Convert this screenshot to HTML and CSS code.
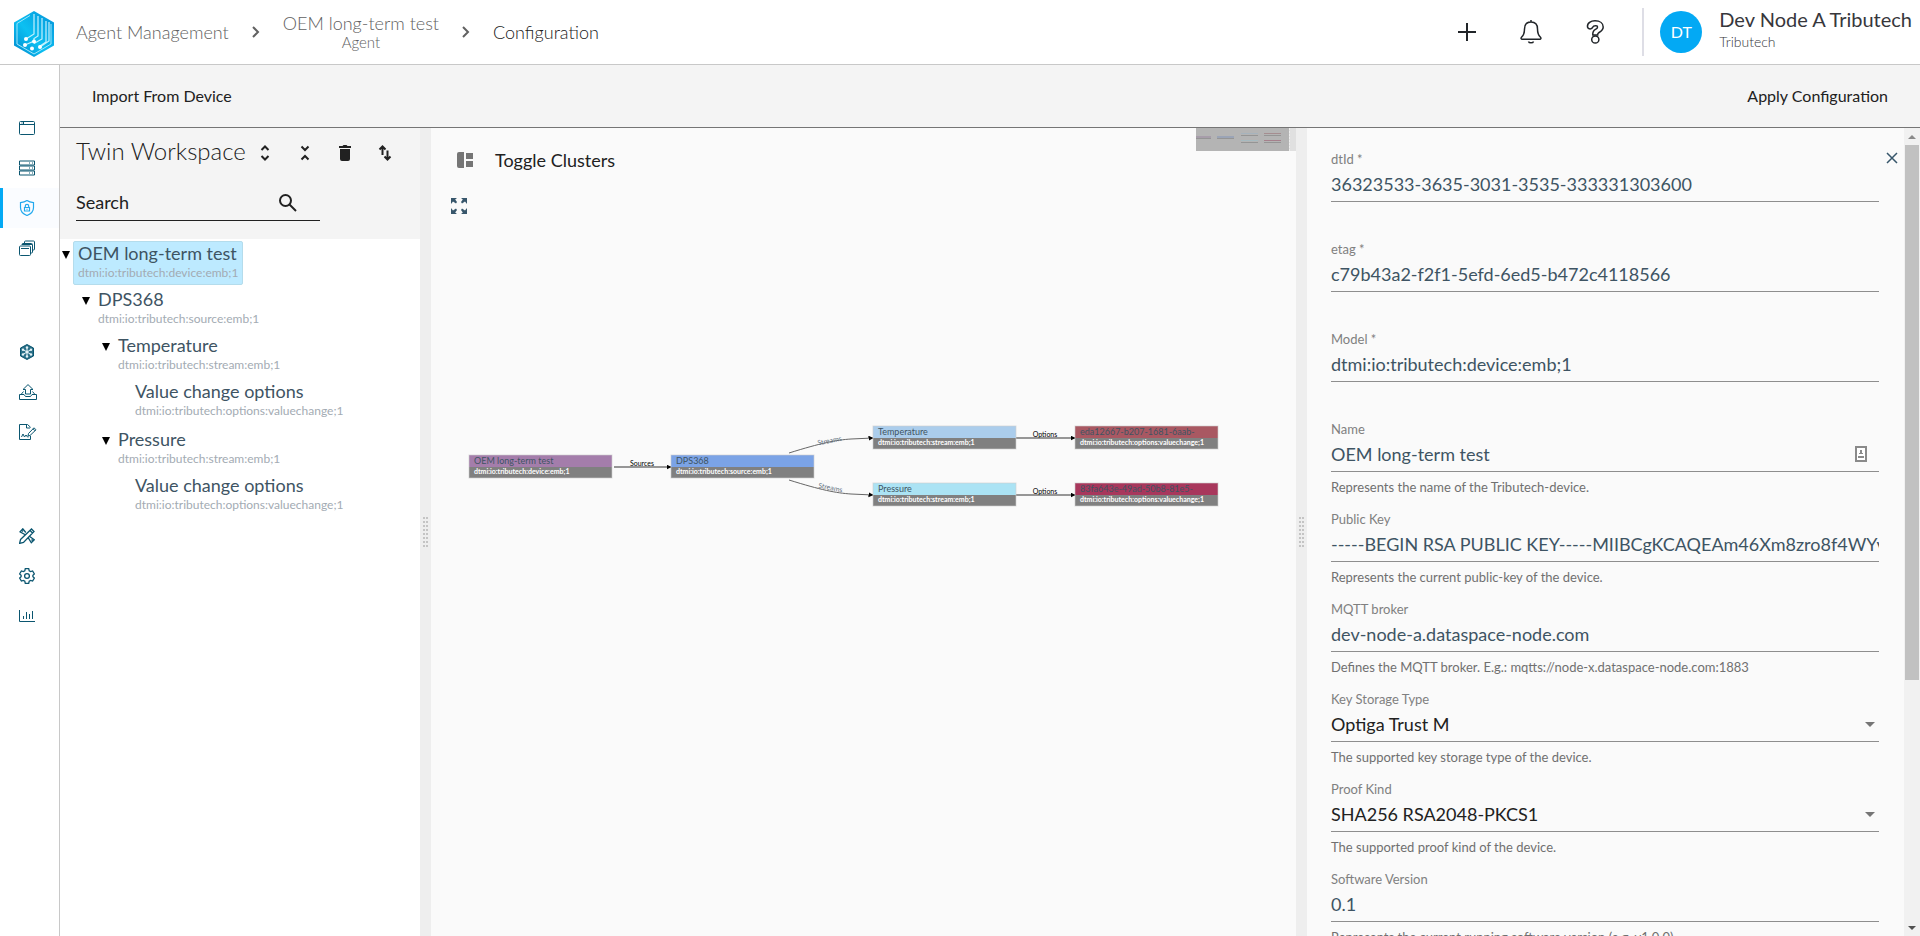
FILE: index.html
```html
<!DOCTYPE html>
<html lang="en">
<head>
<meta charset="utf-8">
<title>Configuration</title>
<link rel="stylesheet" href="styles.css">
</head>
<body>
<header class="topbar">
  <a class="logo" href="#" aria-label="Home">
    <svg width="40" height="46" viewBox="0 0 40 46">
      <defs><linearGradient id="hex" x1="0" y1="1" x2="1" y2="0"><stop offset="0" stop-color="#0086cc"/><stop offset=".45" stop-color="#0cc0f2"/><stop offset="1" stop-color="#0592d8"/></linearGradient></defs>
      <path d="M20 0 40 11.500V34.500L20 46 0 34.500V11.500Z" fill="url(#hex)"/>
      <path d="M16 4.500 3 12.500V33L20 43 37 33V13" fill="none" stroke="#9fe6fb" stroke-width="1"/>
      <path d="M20 3V23L12 28M24 5V25L20 27.500V30L11 34M28 7V28L20 32.500M32 10V31L26 35M35 11V30L26 36" fill="none" stroke="#c4f1fd" stroke-width="1.200"/>
      <g fill="#fff"><circle cx="12" cy="28" r="2"/><circle cx="20" cy="30.500" r="2"/><circle cx="11" cy="34" r="2"/><circle cx="18" cy="37.500" r="2"/><circle cx="26" cy="36" r="2"/></g>
    </svg>
  </a>
  <nav class="crumbs" aria-label="Breadcrumb">
    <a href="#" class="crumb">Agent Management</a>
    <svg class="sep" width="8" height="12" viewBox="0 0 8 12"><path d="M1 1l5 5-5 5"/></svg>
    <a href="#" class="crumb crumb-stack"><span>OEM long-term test</span><small>Agent</small></a>
    <svg class="sep" width="8" height="12" viewBox="0 0 8 12"><path d="M1 1l5 5-5 5"/></svg>
    <span class="crumb current">Configuration</span>
  </nav>
  <div class="actions">
    <button aria-label="Add"><svg width="24" height="24" viewBox="0 0 24 24"><path d="M12 3v18M3 12h18" stroke-width="2"/></svg></button>
    <button aria-label="Notifications"><svg width="24" height="24" viewBox="0 0 24 24"><path d="M12 0v2M12 2C7.500 2 5.500 5 5.500 9c0 5-1 6.500-3 8.300-.8.800-.4 2 .6 2h17.800c1 0 1.400-1.200.6-2-2-1.800-3-3.300-3-8.300 0-4-2-7-6.500-7zM9.500 21.500c.6 1.800 4.400 1.800 5 0" stroke-width="1.500"/></svg></button>
    <button aria-label="Help"><svg width="24" height="24" viewBox="0 0 24 24"><path d="M4.500 7C4 3 8 .8 12 .8c5 0 8.200 2.400 8.200 6.200 0 3.400-2.600 4.600-4.600 5.800-1 .6-.9 1-.9 2.200H9.800c-.3-3.400.8-4.700 2.700-5.700 1.500-.8 2-1.200 2-2.100 0-2.200-4-2-4.800.1C9 9.500 5 9.500 4.500 7z" stroke-width="1.500"/><circle cx="12.300" cy="19.500" r="3.600" stroke-width="1.500"/></svg></button>
  </div>
  <div class="user">
    <span class="avatar">DT</span>
    <div class="user-text"><div class="user-name">Dev Node A Tributech</div><div class="user-org">Tributech</div></div>
  </div>
</header>
<div class="shell">
  <nav class="rail" aria-label="Main">
    <div class="rail-group">
      <a href="#" aria-label="Dashboard"><svg viewBox="0 0 16 16"><path d="M1.500 1.500h13a1 1 0 0 1 1 1v11a1 1 0 0 1-1 1h-13a1 1 0 0 1-1-1v-11a1 1 0 0 1 1-1zM.5 4.500h15M2.500 3h1M4.500 1.500v3"/></svg></a>
      <a href="#" aria-label="Servers"><svg viewBox="0 0 16 16"><path d="M.5 1h15v4H.5zM.5 6h15v4H.5zM.5 11h15v4H.5zM10 3h1M13 3h1M10 8h1M13 8h1M10 13h1M13 13h1"/></svg></a>
      <a href="#" aria-label="Agents" class="active"><svg viewBox="0 0 16 16"><path d="M8 .6c2.200 1.600 4.200 1.900 6.500 2v4.900c0 4-2.500 6.500-6.500 8-4-1.500-6.500-4-6.500-8V2.600c2.300-.1 4.300-.4 6.500-2z"/><path d="M5.500 7.500h5v3.500h-5zM6.300 7.500V6a1.700 1.700 0 0 1 3.400 0v1.500M8 8.800v1"/></svg></a>
      <a href="#" aria-label="Streams"><svg viewBox="0 0 16 16"><path d="M1.500 6h9a1 1 0 0 1 1 1v7.500a1 1 0 0 1-1 1h-9a1 1 0 0 1-1-1V7a1 1 0 0 1 1-1zM2 8.500h8"/><path d="M3 5V4.500a1 1 0 0 1 1-1h8.500a1 1 0 0 1 1 1V12a1 1 0 0 1-1 1H12M3 4.500h10M5.500 3V2a1 1 0 0 1 1-1h8a1 1 0 0 1 1 1v7a1 1 0 0 1-1 1H14"/></svg></a>
    </div>
    <div class="rail-group">
      <a href="#" aria-label="Network"><svg viewBox="0 0 16 16"><path d="M8 .5 14.500 4v8L8 15.500 1.500 12V4z" fill="#2b7088"/><path d="M8 3v10M4 5.500l8 5M12 5.500l-8 5" stroke="#e4f2f6"/><g fill="#e4f2f6" stroke="none"><circle cx="8" cy="3.500" r="1.200"/><circle cx="8" cy="12.500" r="1.200"/><circle cx="4" cy="5.800" r="1.200"/><circle cx="12" cy="5.800" r="1.200"/><circle cx="4" cy="10.500" r="1.200"/><circle cx="12" cy="10.500" r="1.200"/><circle cx="8" cy="8" r="1.400"/></g></svg></a>
      <a href="#" aria-label="Publish"><svg class="wide" viewBox="0 0 18 16"><path d="M6.500 10V5.500H4L9 .6l5 4.900h-2.500V10zM4.500 7.500 2 10.500M13.500 7.500l2.500 3M.5 10.500h4.500l1.500 2h5l1.500-2h4.500v5H.5z"/></svg></a>
      <a href="#" aria-label="Contracts"><svg class="wide" viewBox="0 0 18 16"><path d="M11.500 3.500v-.3L8.500.5H.5v15h11V12M7.500.5v3.500h3.500M2.500 13l1.500-3 1.500 3 1.500-2 1.500 2h1M9.500 9.500 15 3.800l2 2L11 11.500l-2 .5zM14 4.800l2 2"/></svg></a>
    </div>
    <div class="rail-group">
      <a href="#" aria-label="Design"><svg class="bold" viewBox="0 0 16 16"><path d="M1.500 11.500 12.500 1l2.500 2.500L4.500 14.500.6 15.400zM6.300 6.800 1 3.800 3.800.8l3 3.700M9.300 9.800l3 5 2.900-3-4.500-3.300M11 2.500 13.500 5M3 3.500l1-1M12.500 12.500l1-1"/></svg></a>
      <a href="#" aria-label="Settings"><svg class="bold" viewBox="0 0 16 16"><path d="M6.300.7h3.400l.5 2 1.400.8 2-.6 1.800 3-1.500 1.400v1.400l1.500 1.400-1.800 3-2-.6-1.400.8-.5 2H6.300l-.5-2-1.400-.8-2 .6-1.800-3 1.500-1.400V7.300L.6 5.900l1.800-3 2 .6 1.400-.8z"/><circle cx="8" cy="8" r="2.400"/></svg></a>
      <a href="#" aria-label="Statistics"><svg viewBox="0 0 16 16"><path d="M.5 2v11.500H16M4.500 8v3M7.500 4v7M10.500 6v5M13.500 3v8"/></svg></a>
    </div>
  </nav>
  <main class="main">
    <div class="toolbar"><button>Import From Device</button><button>Apply Configuration</button></div>
    <div class="split">
      <section class="tree-panel">
        <div class="tree-head">
          <div class="tree-title">
            <h1>Twin Workspace</h1>
            <button aria-label="Expand all"><svg viewBox="0 0 16 16"><path d="M4.500 5 8 1.500 11.500 5M4.500 11 8 14.500 11.500 11"/></svg></button>
            <button aria-label="Collapse all"><svg viewBox="0 0 16 16"><path d="M4.500 1.500 8 5l3.500-3.500M4.500 14.500 8 11l3.500 3.500"/></svg></button>
            <button aria-label="Delete"><svg viewBox="0 0 16 16"><path d="M2 1h3.500l1-1h3l1 1H14v2H2zM3 4h10v10a2 2 0 0 1-2 2H5a2 2 0 0 1-2-2z" fill="#212121" stroke="none"/></svg></button>
            <button aria-label="Sort"><svg viewBox="0 0 16 16"><path d="M5.500 10V2M2.500 4.500l3-3 3 3M10.500 5.500v9M7.500 11.500l3 3 3-3"/></svg></button>
          </div>
          <div class="search">
            <input type="text" placeholder="Search" aria-label="Search">
            <svg width="18" height="18" viewBox="0 0 18 18"><circle cx="6.500" cy="6.500" r="5.500"/><path d="M10.500 10.500l6.500 6.500"/></svg>
          </div>
        </div>
        <ul class="tree">
          <li><div class="row"><span class="caret"></span><button class="node selected"><b>OEM long-term test</b><small>dtmi:io:tributech:device:emb;1</small></button></div>
            <ul><li><div class="row"><span class="caret"></span><button class="node"><b>DPS368</b><small>dtmi:io:tributech:source:emb;1</small></button></div>
              <ul class="streams">
                <li><div class="row"><span class="caret"></span><button class="node"><b>Temperature</b><small>dtmi:io:tributech:stream:emb;1</small></button></div>
                  <ul><li class="leaf"><button class="node"><b>Value change options</b><small>dtmi:io:tributech:options:valuechange;1</small></button></li></ul></li>
                <li><div class="row"><span class="caret"></span><button class="node"><b>Pressure</b><small>dtmi:io:tributech:stream:emb;1</small></button></div>
                  <ul><li class="leaf"><button class="node"><b>Value change options</b><small>dtmi:io:tributech:options:valuechange;1</small></button></li></ul></li>
              </ul></li></ul></li>
        </ul>
      </section>
      <div class="gutter"><i></i></div>
      <section class="canvas">
        <svg class="graph" width="865" height="808" viewBox="0 0 865 808">
          <defs><marker id="arrow" markerWidth="5" markerHeight="6" refX="4.500" refY="2.500" markerUnits="userSpaceOnUse" orient="auto"><path d="M0 0l5 2.500L0 5z"/></marker></defs>
          <g class="edge">
            <path d="M183 339h57"/><path d="M585 310h59"/><path d="M585 367h59"/>
            <path class="soft" d="M358 325C390 315 405 312 420 311L442 310"/>
            <path class="soft" d="M358 352C390 362 405 365 420 366L442 367"/>
          </g>
          <g class="edge-label">
            <text x="211" y="338">Sources</text><text x="614" y="309">Options</text><text x="614" y="366">Options</text>
            <text class="muted" transform="translate(399 315) rotate(-11)">Streams</text>
            <text class="muted" transform="translate(399 362) rotate(11)">Streams</text>
          </g>
          <g class="gnode" transform="translate(38 327)"><rect width="143" height="12" fill="#a47dab"/><rect y="12" width="143" height="11" fill="#808080"/><rect class="outline" width="143" height="23"/><text x="5" y="9">OEM long-term test</text><text class="sub" x="5" y="19">dtmi:io:tributech:device:emb;1</text></g>
          <g class="gnode" transform="translate(240 327)"><rect width="143" height="12" fill="#7ba3e6"/><rect y="12" width="143" height="11" fill="#808080"/><rect class="outline" width="143" height="23"/><text x="5" y="9">DPS368</text><text class="sub" x="5" y="19">dtmi:io:tributech:source:emb;1</text></g>
          <g class="gnode" transform="translate(442 298)"><rect width="143" height="12" fill="#abcdec"/><rect y="12" width="143" height="11" fill="#808080"/><rect class="outline" width="143" height="23"/><text x="5" y="9">Temperature</text><text class="sub" x="5" y="19">dtmi:io:tributech:stream:emb;1</text></g>
          <g class="gnode" transform="translate(644 298)"><rect width="143" height="12" fill="#a95862"/><rect y="12" width="143" height="11" fill="#808080"/><rect class="outline" width="143" height="23"/><text x="5" y="9">eda12667-b207-1681-6aab-</text><text class="sub" x="5" y="19">dtmi:io:tributech:options:valuechange;1</text></g>
          <g class="gnode" transform="translate(442 355)"><rect width="143" height="12" fill="#abe3f4"/><rect y="12" width="143" height="11" fill="#808080"/><rect class="outline" width="143" height="23"/><text x="5" y="9">Pressure</text><text class="sub" x="5" y="19">dtmi:io:tributech:stream:emb;1</text></g>
          <g class="gnode" transform="translate(644 355)"><rect width="143" height="12" fill="#a8375c"/><rect y="12" width="143" height="11" fill="#808080"/><rect class="outline" width="143" height="23"/><text x="5" y="9">83fa643e-49ad-50b8-81e5-</text><text class="sub" x="5" y="19">dtmi:io:tributech:options:valuechange;1</text></g>
        </svg>
        <svg class="minimap" width="100" height="23" viewBox="0 0 100 23">
          <path fill="#e0e0e0" d="M0 0h100v23H0z"/><path fill="#b4b4b4" d="M0 0h93v23H0z"/><path d="M93.500 0v23" stroke="#eee" stroke-dasharray="2 1"/>
          <g fill="#a79daa"><path d="M0 8h15v2H0z"/><path fill="#9ba4b6" d="M21 8h17v2H21z"/><path fill="#a6b3bd" d="M45 5h17v1H45z"/><path fill="#a6bac0" d="M45 12h17v1H45z"/><path fill="#a58d90" d="M68 5h17v1H68z"/><path fill="#a5808c" d="M68 12h17v1H68z"/></g>
          <path fill="#959595" d="M0 10h15v1H0zM21 10h17v1H21zM45 7h17v1H45zM45 14h17v1H45zM68 7h17v1H68zM68 14h17v1H68z"/>
        </svg>
        <div class="canvas-tools">
          <button class="toggle"><svg width="16" height="16" viewBox="0 0 16 16"><path fill="#757575" d="M2 0h5v16H2a2 2 0 0 1-2-2V2a2 2 0 0 1 2-2zM9 1h7v6H9zM9 9h7v6H9z"/></svg>Toggle Clusters</button>
          <button class="fit" aria-label="Fit to view"><svg width="16" height="16" viewBox="0 0 16 16"><path fill="#37566b" d="M0 0h6L4.200 1.500 6 4 5 5.500 2 3.500 0 6zM16 0v6l-2-2.500-3 2L10 4l1.800-2.500L10 0zM0 16v-6l2 2.500 3-2L6 12l-1.800 2.500L6 16zM16 16h-6l1.800-1.500L10 12l1-1.500 3 2 2-2.500z"/></svg></button>
        </div>
      </section>
      <div class="gutter"><i></i></div>
      <section class="details">
        <form class="form">
          <div class="field"><label for="f1">dtId *</label><input id="f1" value="36323533-3635-3031-3535-333331303600"><p></p></div>
          <div class="field"><label for="f2">etag *</label><input id="f2" value="c79b43a2-f2f1-5efd-6ed5-b472c4118566"><p></p></div>
          <div class="field"><label for="f3">Model *</label><input id="f3" value="dtmi:io:tributech:device:emb;1"><p></p></div>
          <div class="field"><label for="f4">Name</label><div class="with-icon"><input id="f4" value="OEM long-term test"><svg width="12" height="16" viewBox="0 0 12 16"><path d="M1 1h10v14H1z" fill="#fff" stroke="#8a8a8a" stroke-width="2"/><path d="M5 4h2v3h1v1H4V7h1zM3 10h6v2H3z" fill="#8a8a8a"/></svg></div><p>Represents the name of the Tributech-device.</p></div>
          <div class="field"><label for="f5">Public Key</label><input id="f5" value="-----BEGIN RSA PUBLIC KEY-----MIIBCgKCAQEAm46Xm8zro8f4WYvT"><p>Represents the current public-key of the device.</p></div>
          <div class="field"><label for="f6">MQTT broker</label><input id="f6" value="dev-node-a.dataspace-node.com"><p>Defines the MQTT broker. E.g.: mqtts://node-x.dataspace-node.com:1883</p></div>
          <div class="field"><label for="f7">Key Storage Type</label><div class="select"><select id="f7"><option>Optiga Trust M</option></select></div><p>The supported key storage type of the device.</p></div>
          <div class="field"><label for="f8">Proof Kind</label><div class="select"><select id="f8"><option>SHA256 RSA2048-PKCS1</option></select></div><p>The supported proof kind of the device.</p></div>
          <div class="field"><label for="f9">Software Version</label><input id="f9" value="0.1"><p>Represents the current running software version (e.g. v1.0.0)</p></div>
        </form>
        <button class="close" aria-label="Close"><svg width="12" height="12" viewBox="0 0 12 12"><path d="M1 1l10 10M11 1 1 11"/></svg></button>
        <div class="scrollbar"><span class="up"></span><span class="track"><span class="thumb"></span></span><span class="down"></span></div>
      </section>
    </div>
  </main>
</div>
</body>
</html>
```
FILE: styles.css
```css
* { box-sizing: border-box; }
body {
  margin: 0;
  height: 100vh;
  display: flex;
  flex-direction: column;
  overflow: hidden;
  font-family: Lato, "Liberation Sans", sans-serif;
  font-size: 18px;
  color: #212121;
  background: #fff;
}
button, input, select { font: inherit; color: inherit; background: none; border: 0; padding: 0; margin: 0; outline: 0; }
button { cursor: pointer; }
a { color: inherit; text-decoration: none; }
ul { list-style: none; margin: 0; padding: 0; }
svg { display: block; flex: none; }

.topbar { flex: none; display: flex; align-items: center; height: 65px; padding: 0 8px 0 14px; border-bottom: 1px solid #c8c8c8; }
.logo { margin-top: 4px; }
.crumbs { flex: 1; display: flex; align-items: center; gap: 23px; padding-left: 22px; }
.crumb { font-weight: 300; color: #616161; line-height: 22px; }
.crumb.current { color: #212121; }
.crumb-stack { display: flex; flex-direction: column; align-items: center; padding-bottom: 3px; }
.crumb-stack small { font-size: 15px; line-height: 16px; }
.sep { fill: none; stroke: #616161; stroke-width: 2; }
.actions { display: flex; gap: 40px; padding-right: 35px; fill: none; stroke: #212529; }
.user { display: flex; align-items: center; gap: 17px; height: 48px; padding-left: 16px; border-left: 2px solid #dedee6; color: #37373c; font-size: 20px; line-height: 22px; }
.user-text { padding-bottom: 2px; }
.avatar { display: grid; place-items: center; width: 42px; height: 42px; border-radius: 50%; background: #03a9f4; color: #fff; font-size: 16px; }
.user-org { font-size: 14px; line-height: 24px; font-weight: 300; }

.shell { flex: 1; display: flex; min-height: 0; }
.rail { flex: none; width: 60px; padding-top: 43px; border-right: 1px solid #c8c8c8; display: flex; flex-direction: column; gap: 64px; }
.rail a { display: flex; align-items: center; height: 40px; padding-left: 16px; border-left: 3px solid transparent; }
.rail a.active { border-color: #03a9f4; background: #fafcff; }
.rail svg { width: 16px; height: 16px; fill: none; stroke: #0b5670; stroke-width: 1; }
.rail svg.wide { width: 18px; }
.rail svg.bold { stroke-width: 1.3; }
.rail .active svg { stroke: #22a9ee; stroke-width: 1.2; }

.main { flex: 1; display: flex; flex-direction: column; min-width: 0; }
.toolbar { flex: none; display: flex; align-items: center; justify-content: space-between; height: 63px; padding: 0 32px 2px; background: #f4f4f4; border-bottom: 1px solid #757575; font-size: 16px; }
.split { flex: 1; display: flex; min-height: 0; }

.tree-panel { flex: 360 1 0; min-width: 0; overflow: hidden; }
.tree-head { height: 111px; padding: 8px 16px 0; background: #f4f4f4; }
.tree-title { display: flex; align-items: center; gap: 24px; height: 34px; }
.tree-title h1 { margin: 0 -12px 0 0; padding-bottom: 4px; width: 169px; font-size: 24px; line-height: 30px; font-weight: 300; white-space: nowrap; }
.tree-title svg { width: 16px; height: 16px; fill: none; stroke: #212121; stroke-width: 2; }
.search { display: flex; align-items: center; width: 244px; height: 35px; margin-top: 16px; padding-right: 23px; border-bottom: 1px solid #212121; }
.search input { flex: 1; min-width: 0; padding-bottom: 2px; }
.search input::placeholder { color: #212121; opacity: 1; }
.search svg { fill: none; stroke: #212121; stroke-width: 2; }
.tree { padding: 2px 0 0 2px; }
.row { display: flex; gap: 3px; }
.caret { width: 8px; height: 8px; margin: 10px 0 0; background: #000; clip-path: polygon(0 0, 100% 0, 50% 100%); }
.tree ul { padding-left: 20px; }
.tree .leaf { padding-left: 8px; }
.streams > li + li { margin-top: 4px; }
.node { display: flex; flex-direction: column; height: 44px; margin-bottom: 2px; padding: 0 4px; border: 1px solid transparent; text-align: left; white-space: nowrap; color: #3e5463; }
.node.selected { background: #bdeaff; border-color: #b4dcec; border-radius: 2px; }
.node b { font-weight: 400; line-height: 22px; }
.node small { font-size: 12px; line-height: 18px; color: #a3abb3; }

.gutter { flex: none; width: 11px; background: #eee; display: grid; place-items: center; }
.gutter i { width: 6px; height: 30px; background: repeating-linear-gradient(transparent 0 2px, #eee 2px 4px), linear-gradient(90deg, #c4c4c4 2px, transparent 2px 3px, #c4c4c4 3px 5px, transparent 5px); }

.canvas { flex: 865 1 0; position: relative; min-width: 0; overflow: hidden; background: #fafafa; }
.graph { position: absolute; left: 0; top: 0; }
.minimap { position: absolute; right: 0; top: 0; }
.canvas-tools { position: relative; display: flex; flex-direction: column; align-items: flex-start; gap: 27px; padding: 21px 20px; }
.toggle { display: flex; align-items: center; gap: 22px; height: 22px; padding-left: 6px; }
.edge { fill: none; stroke: #333; stroke-width: 1; }
.edge path { marker-end: url(#arrow); }
.edge marker path, #arrow path { fill: #000; stroke: none; marker-end: none; }
.edge .soft { stroke: #666; }
.edge-label { font-size: 7px; text-anchor: middle; }
.muted { fill: #607080; }
.gnode { font-size: 9px; fill: #3e5463; }
.gnode .sub { font-size: 7px; font-weight: 700; fill: #fff; }
.outline { fill: none; stroke: #d0d0d0; stroke-opacity: .6; }

.details { flex: 613 1 0; position: relative; display: flex; min-width: 0; background: #fafafa; }
.form { flex: 1; min-width: 0; overflow: hidden; padding: 23px 25px 0 24px; }
.field { display: flex; flex-direction: column; height: 90px; color: #3e5463; }
.field label { font-size: 13px; line-height: 16px; margin-bottom: 5px; color: #808080; }
.field input, .field select { width: 100%; height: 30px; padding: 0 0 5px; border-bottom: 1px solid #8e8e8e; border-radius: 0; }
.field p { margin: 7px 0 0; font-size: 13px; line-height: 16px; color: #707070; white-space: nowrap; }
.with-icon, .select { position: relative; }
.with-icon svg { position: absolute; right: 12px; top: 4px; }
.select select { appearance: none; color: #212121; }
.select::after { content: ""; position: absolute; right: 4px; top: 10px; border: 5px solid transparent; border-top-color: #757575; border-bottom: 0; }
.close { position: absolute; right: 22px; top: 24px; fill: none; stroke: #37566b; stroke-width: 1.5; }
.scrollbar { flex: none; width: 16px; display: flex; flex-direction: column; align-items: center; background: #f1f1f1; }
.track { flex: 1; width: 14px; margin: 6px 0; }
.thumb { display: block; height: 69%; background: #c1c1c1; }
.up, .down { border: 4px solid transparent; }
.up { margin-top: 7px; border-top: 0; border-bottom-color: #8a8a8a; }
.down { margin-bottom: 6px; border-bottom: 0; border-top-color: #505050; }
```
